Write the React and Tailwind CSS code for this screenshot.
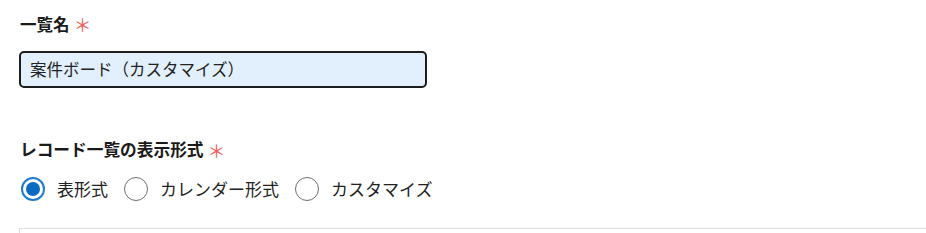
import React, { useState } from 'react';

const FONT = { fontFamily: '"Noto Sans CJK JP", "Noto Sans", sans-serif' };

function Required() {
  return <span className="ml-[4px] text-[18px] leading-none text-[#f0605a]">＊</span>;
}

function Radio({ checked, label, onSelect }) {
  return (
    <label className="flex items-center cursor-pointer" onClick={onSelect}>
      {checked ? (
        <span className="w-[24px] h-[24px] rounded-full border-[2px] border-[#1f7bd0] flex items-center justify-center bg-white">
          <span className="w-[14px] h-[14px] rounded-full bg-[#0b6bc0]" />
        </span>
      ) : (
        <span className="w-[24px] h-[24px] rounded-full border-[1.5px] border-[#6e6e6e] bg-white" />
      )}
      <span className="ml-[12px] text-[17px] text-[#222]">{label}</span>
    </label>
  );
}

export default function App() {
  const [view, setView] = useState('table');

  return (
    <div className="w-[926px] h-[233px] bg-white overflow-hidden pl-[20px]" style={FONT}>
      {/* 一覧名 */}
      <div className="pt-[12px] flex items-center h-[36px]">
        <span className="text-[16.5px] font-bold text-[#1a1a1a]">一覧名</span>
        <Required />
      </div>
      <div className="mt-[15px] w-[408px] h-[37px] -ml-[1px] rounded-[5px] border-2 border-[#1c1c1c] bg-[#e2f0fd] flex items-center px-[9px]">
        <span className="text-[16.5px] text-[#222]">案件ボード（カスタマイズ）</span>
      </div>

      {/* レコード一覧の表示形式 */}
      <div className="mt-[50px] flex items-center h-[24px]">
        <span className="text-[16.7px] font-bold text-[#1a1a1a]">レコード一覧の表示形式</span>
        <Required />
      </div>
      <div className="mt-[14px] flex items-center gap-[16px] pl-[1px]">
        <Radio checked={view === 'table'} label="表形式" onSelect={() => setView('table')} />
        <Radio checked={view === 'calendar'} label="カレンダー形式" onSelect={() => setView('calendar')} />
        <Radio checked={view === 'custom'} label="カスタマイズ" onSelect={() => setView('custom')} />
      </div>

      <div className="mt-[26px] -ml-[1px] h-[40px] border-t border-l border-[#dcdcdc]" />
    </div>
  );
}
